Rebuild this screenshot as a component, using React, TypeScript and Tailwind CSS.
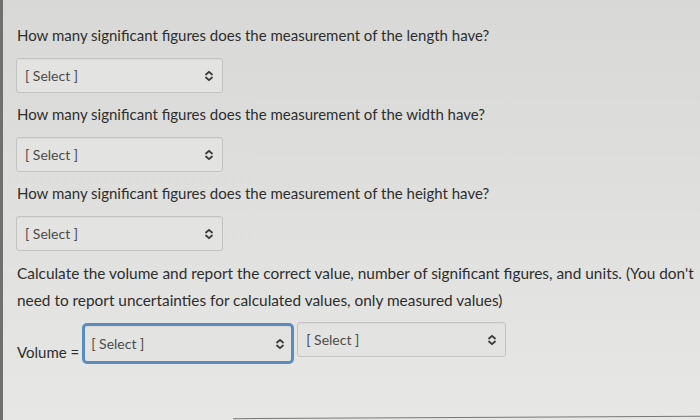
import React from 'react';

const Chevrons = () => (
  <svg width="10" height="12" viewBox="0 0 10 12" fill="none" stroke="#3a3a3a" strokeWidth="1.8" strokeLinecap="round" strokeLinejoin="round">
    <path d="M2 4.5 L5 1.8 L8 4.5" />
    <path d="M2 7.5 L5 10.2 L8 7.5" />
  </svg>
);

function Select({ width, focused }: { width: string; focused?: boolean }) {
  const box = focused
    ? 'border-[3px] border-[#5b8cc0] rounded-[5px] h-[41px] pl-[6px] pr-[6px]'
    : 'border border-[#c3c4c1] rounded-[3px] h-[35px] pl-[8px] pr-[8px]';
  return (
    <div className={`${width} ${box} flex items-center justify-between bg-[#e3e4e2] shadow-[inset_0_1px_1px_rgba(0,0,0,0.04)]`}>
      <span className="text-[14px] text-[#4b4b4b]">[ Select ]</span>
      <Chevrons />
    </div>
  );
}

const questions = ['length', 'width', 'height'];

export default function App() {
  return (
    <main
      className="relative w-[700px] h-[420px] overflow-hidden bg-gradient-to-b from-[#d8d9d7] to-[#e7e7e5] text-[#2e2e2e] border-l-[3px] border-[#707070]"
      style={{ fontFamily: 'Lato, "Open Sans", sans-serif' }}
    >
      <div className="pl-[14px] pt-[23px]">
        {questions.map((q, i) => (
          <section key={q} className={i === 0 ? '' : 'mt-[9px]'}>
            <p className="text-[15px] leading-[24px]">
              How many significant figures does the measurement of the {q} have?
            </p>
            <div className="mt-[11px] ml-[-1px]">
              <Select width="w-[207px]" />
            </div>
          </section>
        ))}

        <p className="mt-[9px] text-[15.4px] leading-[27px]">
          Calculate the volume and report the correct value, number of significant figures, and units. (You don't
          <br />
          need to report uncertainties for calculated values, only measured values)
        </p>

        <div className="mt-[8px] flex items-start gap-[3px]">
          <span className="text-[15px] mt-[19px]">Volume =</span>
          <div className="mt-[1px]">
            <Select width="w-[212px]" focused />
          </div>
          <Select width="w-[209px]" />
        </div>
      </div>
      <div className="absolute left-[230px] right-0 bottom-[2px] h-[1px] bg-[#777] -rotate-[0.3deg]" />
    </main>
  );
}
